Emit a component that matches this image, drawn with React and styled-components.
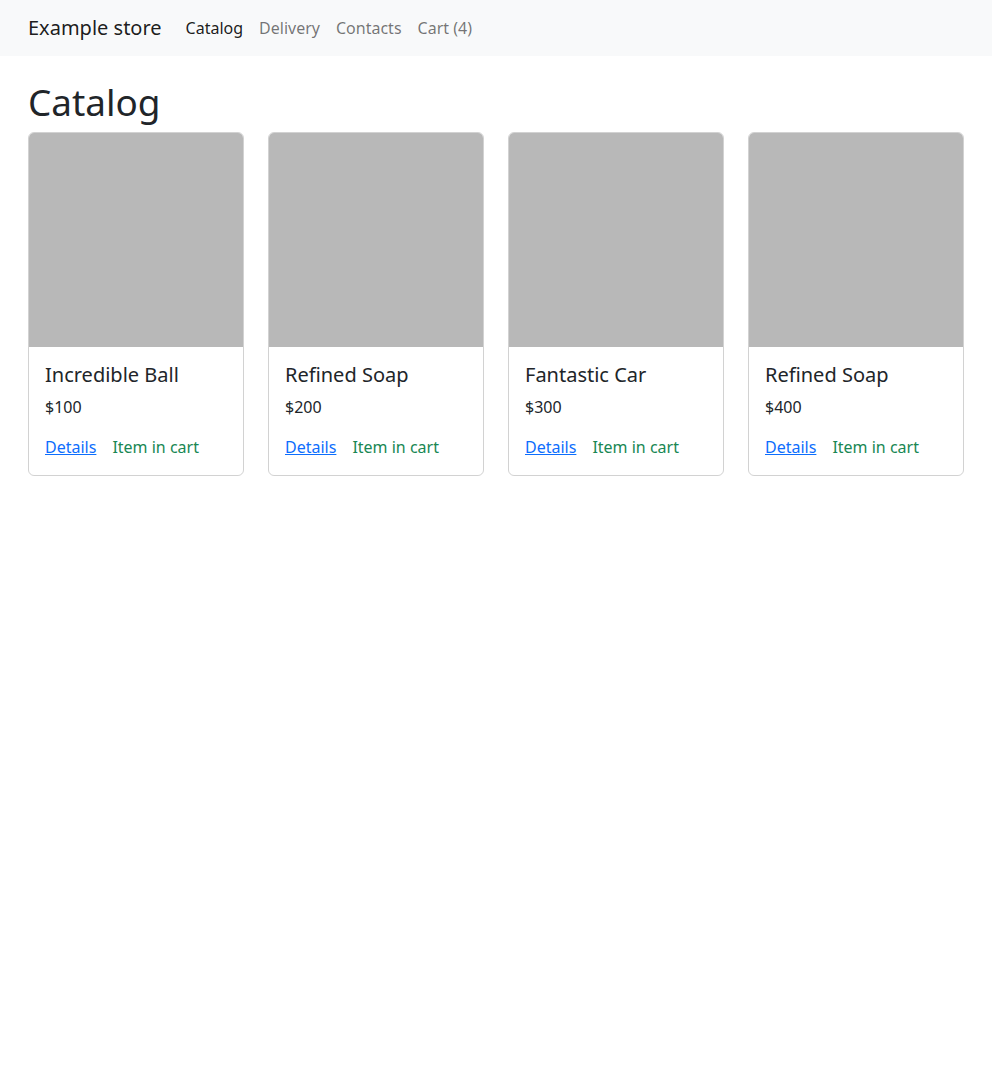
import React from "react";
import styled, { createGlobalStyle } from "styled-components";

const Global = createGlobalStyle`
  *, *::before, *::after { box-sizing: border-box; }
  body {
    margin: 0;
    font-family: "Noto Sans", "Liberation Sans", sans-serif;
    font-size: 16px;
    line-height: 1.5;
    color: #212529;
    background: #fff;
  }
`;

const Navbar = styled.nav`
  background: #f8f9fa;
  padding: 8px 0;
`;

const Container = styled.div`
  max-width: 960px;
  margin: 0 auto;
  padding: 0 12px;
  display: ${(p) => (p.$flex ? "flex" : "block")};
  align-items: center;
`;

const Brand = styled.a`
  font-size: 20px;
  line-height: 30px;
  padding: 5px 0;
  margin-right: 16px;
  color: rgba(0, 0, 0, 0.9);
  text-decoration: none;
  white-space: nowrap;
`;

const NavList = styled.div`
  display: flex;
`;

const NavLink = styled.a`
  padding: 8px;
  line-height: 24px;
  color: ${(p) => (p.$active ? "rgba(0,0,0,0.9)" : "rgba(0,0,0,0.55)")};
  text-decoration: none;
`;

const Main = styled.main`
  padding-top: 24px;
`;

const Title = styled.h1`
  font-size: 36.88px;
  font-weight: 400;
  line-height: 1.2;
  margin: 0 0 8px;
`;

const Grid = styled.div`
  display: grid;
  grid-template-columns: repeat(4, 1fr);
  gap: 24px;
`;

const Card = styled.div`
  border: 1px solid rgba(0, 0, 0, 0.175);
  border-radius: 6px;
  overflow: hidden;
  display: flex;
  flex-direction: column;
`;

const Img = styled.div`
  aspect-ratio: 1 / 1;
  background: #b8b8b8;
`;

const Body = styled.div`
  padding: 16px;
`;

const CardTitle = styled.h5`
  font-size: 20px;
  font-weight: 400;
  line-height: 1.2;
  margin: 0 0 8px;
`;

const Price = styled.p`
  margin: 0 0 16px;
`;

const Actions = styled.div`
  display: flex;
  gap: 16px;
`;

const Link = styled.a`
  color: #0d6efd;
  text-decoration: underline;
`;

const InCart = styled.span`
  color: #198754;
`;

const items = [
  { name: "Incredible Ball", price: 100 },
  { name: "Refined Soap", price: 200 },
  { name: "Fantastic Car", price: 300 },
  { name: "Refined Soap", price: 400 },
];

export default function App() {
  return (
    <>
      <Global />
      <Navbar>
        <Container $flex>
          <Brand href="#">Example store</Brand>
          <NavList>
            <NavLink href="#" $active>Catalog</NavLink>
            <NavLink href="#">Delivery</NavLink>
            <NavLink href="#">Contacts</NavLink>
            <NavLink href="#">Cart (4)</NavLink>
          </NavList>
        </Container>
      </Navbar>
      <Main>
        <Container>
          <Title>Catalog</Title>
          <Grid>
            {items.map((it, i) => (
              <Card key={i}>
                <Img />
                <Body>
                  <CardTitle>{it.name}</CardTitle>
                  <Price>${it.price}</Price>
                  <Actions>
                    <Link href="#">Details</Link>
                    <InCart>Item in cart</InCart>
                  </Actions>
                </Body>
              </Card>
            ))}
          </Grid>
        </Container>
      </Main>
    </>
  );
}
